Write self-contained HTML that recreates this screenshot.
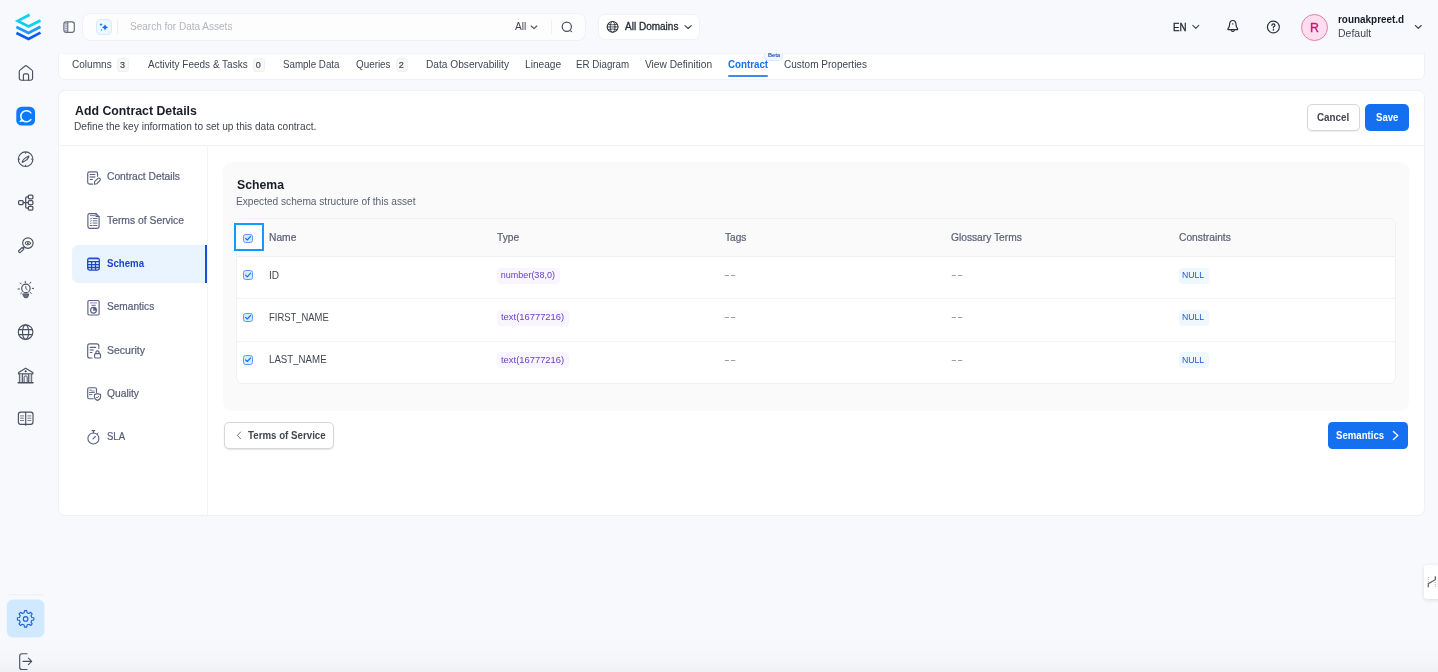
<!DOCTYPE html>
<html lang="en">
<head>
<meta charset="utf-8">
<title>Add Contract Details</title>
<style>
*{box-sizing:border-box;margin:0;padding:0}
html,body{width:1438px;height:672px;overflow:hidden}
body{background:#f8f9fc;font-family:"Liberation Sans",sans-serif;color:#414651;position:relative;font-size:10px}
.abs{position:absolute}
.t{position:absolute;white-space:nowrap;line-height:20px;height:20px;transform-origin:0 50%}
svg{position:absolute;overflow:visible}
.ic{fill:none;stroke-linecap:round;stroke-linejoin:round}
/* header */
#search{left:81.800px;top:12.500px;width:504px;height:28.800px;background:#fdfdfe;border:1px solid #eff1f6;border-radius:8px}
#spark{left:95.500px;top:18.800px;width:16.300px;height:16.200px;background:#eff7ff;border:1px solid #d3ebfd;border-radius:4.500px}
#domain{left:598.100px;top:14.300px;width:102.300px;height:26px;background:#fff;border:1px solid #f1f2f6;border-radius:7px}
/* tab bar */
#tabs{left:58.400px;top:53.400px;width:1366.700px;height:26.600px;background:#fff;border-radius:0 0 7px 7px;border:1px solid #eff1f6;border-top-color:#f4f5f9}
.badge{position:absolute;top:58px;height:14px;width:12px;background:#f7f7f8;border:1px solid #f0f0f2;border-radius:3px;font-size:8.8px;line-height:12.5px;text-align:center;color:#414651}
/* main */
#card{left:58.400px;top:89.500px;width:1366.800px;height:426px;background:#fff;border-radius:7px;border:1px solid #eff1f6}
#hdiv{left:59px;top:145px;width:1366px;height:1px;background:#f2f3f6}
#vdiv{left:207px;top:146px;width:1px;height:369px;background:#f2f3f6}
.btn{position:absolute;border-radius:5px;height:27px}
#navsel{left:72px;top:245px;width:135px;height:38px;background:#eaf4fe;border-radius:6px 0 0 6px;border-right:2px solid #1d4ed8}
#gray{left:223px;top:162px;width:1186px;height:249px;background:#fafafa;border-radius:9px}
#table{left:236px;top:218px;width:1160px;height:166px;background:#fff;border:1px solid #f0f1f3;border-radius:7px;overflow:hidden}
#thead{left:0;top:0;width:100%;height:38px;background:#fafafa;border-bottom:1px solid #f0f1f3}
.rline{position:absolute;left:0;width:100%;height:1px;background:#f3f4f6}
.cb{position:absolute;width:10px;height:9.6px;background:#d7e9fe;border:1px solid #5a9ef4;border-radius:2.6px}
.pill{position:absolute;height:16px;border-radius:4px}
.pp{background:#f9f5ff}
.pb{background:#eff8ff}
#txt{position:absolute;left:0;top:0;width:1438px;height:672px;will-change:transform}
</style>
</head>
<body>
<!-- ===== left app sidebar ===== -->
<svg id="logo" style="left:0;top:0" width="59" height="50" viewBox="0 0 59 50">
  <g fill="none" stroke-width="2.7" stroke-linejoin="miter" stroke-linecap="butt">
    <polyline points="16.4,33 28.5,39 40.5,32.6" stroke="#0b5cf5"/>
    <polyline points="16.4,27 28.5,32.9 40.5,26.7" stroke="#1a9cf5"/>
    <polyline points="29.6,14.700 17.800,20.900 28.500,26.500 40.500,20.500" stroke="#06d1f5"/>
  </g>
</svg>
<svg id="sideicons" style="left:0;top:50px" width="59" height="622" viewBox="0 50 59 622">
  <!-- home -->
  <g class="ic" stroke-width="1.15" stroke="#4a5061">
    <path d="M19.300 71.400 Q19.300 70.600 20 70.100 L25.100 66 Q25.900 65.400 26.700 66 L31.900 70.100 Q32.600 70.600 32.600 71.400 V78 Q32.600 80.200 30.400 80.200 H21.500 Q19.300 80.200 19.300 78 Z"/>
    <path d="M23.4 80.2 V75.3 Q23.4 73.9 24.8 73.9 H27.2 Q28.6 73.9 28.6 75.3 V80.2"/>
  </g>
  <!-- collate C -->
  <rect x="16.3" y="106.8" width="18.7" height="18.8" rx="5.2" fill="#0b7aff"/>
  <path d="M30.9 112.9 A5.6 5.6 0 1 0 30.9 119.6" fill="none" stroke="#fff" stroke-width="1.5" stroke-linecap="round"/>
  <path d="M21.6 119.3 L19.6 121.7 L23.2 121.1 Z" fill="#fff" stroke="#fff" stroke-width="0.6" stroke-linejoin="round"/>
  <!-- compass -->
  <g class="ic" stroke-width="1.15" stroke="#4a5061">
    <circle cx="25.6" cy="159.2" r="7.3"/>
    <path d="M22.2 162.4 Q22.6 158.8 28.9 156 Q28.6 159.6 22.2 162.4 Z" stroke-width="1.1"/>
    <path d="M25.6 152.4v.9M25.6 165.1v.9M18.8 159.2h.9M31.5 159.2h.9" stroke-width="1"/>
  </g>
  <!-- lineage -->
  <g class="ic" stroke="#4a5061" stroke-width="1.25">
    <rect x="18.6" y="200.5" width="4.6" height="4.1" rx="1.1"/>
    <rect x="28.3" y="195" width="4.6" height="3.8" rx="1.1"/>
    <rect x="28.3" y="200.6" width="4.6" height="3.9" rx="1.1"/>
    <rect x="28.3" y="206.3" width="4.6" height="3.8" rx="1.1"/>
    <path d="M23.2 202.5H28.3M28.3 196.9H26.8Q25.7 196.9 25.7 198V207.1Q25.7 208.2 26.8 208.2H28.3"/>
  </g>
  <!-- search eye -->
  <g class="ic" stroke-width="1.15" stroke="#4a5061">
    <circle cx="27.9" cy="243.1" r="5.2"/>
    <ellipse cx="27.9" cy="243.2" rx="2.7" ry="1.7" stroke-width="1"/>
    <circle cx="27.9" cy="243.2" r="1" fill="#4a5061" stroke="none"/>
    <path d="M22.200 247.300 L23.900 249 L20.700 252.200 Q19.850 253.050 19 252.200 Q18.150 251.350 19 250.500 Z" stroke-width="1.100"/>
    <path d="M23.100 248.100 L24.300 246.900" stroke-width="1.100"/>
  </g>
  <!-- bulb -->
  <g class="ic" stroke-width="1.15" stroke="#4a5061">
    <circle cx="25.9" cy="288.4" r="4.2"/>
    <path d="M23 293.9H28.8L27.9 296.9Q27.6 297.7 26.8 297.7H25Q24.2 297.7 23.9 296.9Z" fill="#6b7080" stroke-width="0.9"/>
    <path d="M25.8 286.3V288.6L27.2 289.6" stroke-width="0.9"/>
    <path d="M25.3 281.3v1.5M20.2 282.9l1 1.1M30.9 282.2l-1 1.2M18 289h1.5M32.3 288.4h1.3M20.6 293.8l1-1M30.3 292.4l1 1" stroke-width="1"/>
  </g>
  <!-- globe -->
  <g class="ic" stroke-width="1.15" stroke="#4a5061">
    <circle cx="25.6" cy="332.1" r="7.3"/>
    <ellipse cx="25.6" cy="332.1" rx="3.1" ry="7.3"/>
    <path d="M18.9 329.6H32.3M18.9 334.6H32.3"/>
  </g>
  <!-- bank -->
  <g class="ic" stroke-width="1.15" stroke="#4a5061">
    <path d="M18.6 373.9 Q18 372.8 19 372.2 L25.6 368.2 L32.4 372.2 Q33.4 372.8 32.7 373.9 Z"/>
    <circle cx="25.6" cy="371.3" r="0.7" fill="#414651" stroke-width="0.6"/>
    <rect x="19.5" y="374.4" width="2.8" height="8" fill="#c9ccd2" stroke="none"/>
    <rect x="28.7" y="374.4" width="2.8" height="8" fill="#c9ccd2" stroke="none"/>
    <path d="M19.4 374.4V382.3M22.5 374.4V382.3M28.6 374.4V382.3M31.7 374.4V382.3" stroke-width="0.9"/>
    <path d="M24.1 382.3V377Q24.1 376 25.1 376H26.2Q27.2 376 27.2 377V382.3" stroke-width="1"/>
    <path d="M18.2 382.7H33" stroke-width="1.5"/>
  </g>
  <!-- book -->
  <g class="ic" stroke-width="1.15" stroke="#4a5061">
    <rect x="18.4" y="412.1" width="14.6" height="12.2" rx="2.3"/>
    <path d="M25.7 412.4V425.2"/>
    <path d="M20.4 415.9h3.3M20.4 418.2h3.3M20.4 420.5h3.3M27.8 415.9h3.1M27.8 418.2h3.1M27.8 420.5h3.1" stroke-width="0.9" stroke="#6b7080"/>
  </g>
  <!-- settings -->
  <rect x="6.7" y="594.2" width="37.8" height="1" fill="#eef0f4"/>
  <rect x="6.7" y="599.5" width="37.8" height="37.9" rx="6.5" fill="#d1e9ff"/>
  <g fill="none" stroke="#1d5fd8" stroke-width="1.1" stroke-linejoin="round">
    <circle cx="25.6" cy="618.9" r="2.3"/>
    <path d="M24.13 612.77 L24.50 610.67 L26.70 610.67 L27.07 612.77 L28.89 613.53 L30.64 612.30 L32.20 613.86 L30.97 615.61 L31.73 617.43 L33.83 617.80 L33.83 620.00 L31.73 620.37 L30.97 622.19 L32.20 623.94 L30.64 625.50 L28.89 624.27 L27.07 625.03 L26.70 627.13 L24.50 627.13 L24.13 625.03 L22.31 624.27 L20.56 625.50 L19.00 623.94 L20.23 622.19 L19.47 620.37 L17.37 620.00 L17.37 617.80 L19.47 617.43 L20.23 615.61 L19.00 613.86 L20.56 612.30 L22.31 613.53Z"/>
  </g>
  <!-- logout -->
  <g class="ic" stroke="#4a5061" stroke-width="1.1">
    <path d="M27 653.7H22Q19.7 653.7 19.7 656V667.2Q19.7 669.5 22 669.5H27"/>
    <path d="M23 661.4H31.6M28.4 658.1L31.7 661.4L28.4 664.7"/>
  </g>
</svg>

<!-- ===== top header ===== -->
<svg style="left:56px;top:10px" width="30" height="35" viewBox="56 10 30 35">
  <rect x="63.9" y="21.8" width="10.4" height="10.5" rx="2.2" fill="#fff" stroke="#676c79" stroke-width="1.2"/>
  <path d="M66.1 22.4H67.7V31.7H66.1Q64.5 31.7 64.5 30.1V24Q64.5 22.4 66.1 22.4Z" fill="#a4a9b5"/>
  <path d="M67.8 22V32" stroke="#676c79" stroke-width="1.1"/>
  <path d="M65 25h2.2M65 27.2h2.2M65 29.4h2.2" stroke="#fff" stroke-width="0.7"/>
</svg>
<div class="abs" id="search"></div>
<div class="abs" id="spark"></div>
<svg style="left:95px;top:18px" width="18" height="18" viewBox="95 18 18 18">
  <path d="M105 24.300 Q105.500 26.900 108 27.400 Q105.500 27.900 105 30.500 Q104.500 27.900 102 27.400 Q104.500 26.900 105 24.300Z" fill="#1570ef"/>
  <path d="M101 23 Q101.3 24.3 102.6 24.6 Q101.3 24.9 101 26.2 Q100.7 24.9 99.4 24.6 Q100.7 24.3 101 23Z" fill="#1570ef"/>
  <path d="M101.5 28.9 Q101.7 29.8 102.6 30 Q101.7 30.2 101.5 31.1 Q101.3 30.2 100.4 30 Q101.3 29.8 101.5 28.9Z" fill="#1570ef"/>
</svg>
<div class="abs" style="left:117px;top:20px;width:1px;height:14px;background:#eceef4"></div>
<svg style="left:528px;top:22px" width="12" height="10" viewBox="528 22 12 10"><path class="ic" stroke="#4a5061" d="M531.2 26 L534 28.7 L536.8 26" stroke-width="1.1"/></svg>
<div class="abs" style="left:551px;top:20px;width:1px;height:14px;background:#eceef4"></div>
<svg style="left:558px;top:18px" width="18" height="18" viewBox="558 18 18 18">
  <circle class="ic" stroke="#4a5061" cx="566.8" cy="26.8" r="4.6" stroke-width="1.2"/>
  <path class="ic" stroke="#4a5061" d="M570.6 30.8 L571.5 31.7" stroke-width="1.2"/>
</svg>
<div class="abs" id="domain"></div>
<svg style="left:604px;top:18px" width="18" height="18" viewBox="604 18 18 18">
  <g class="ic" stroke="#2b313d" stroke-width="1.05">
    <circle cx="612.6" cy="26.900" r="5.400"/>
    <ellipse cx="612.6" cy="26.900" rx="2.400" ry="5.400" stroke-width="0.850"/>
    <path d="M607.2 26.900H618M608.200 24.300Q612.600 25.400 617 24.300M608.200 29.500Q612.600 28.400 617 29.500" stroke-width="0.850"/>
  </g>
</svg>
<svg style="left:682px;top:22px" width="12" height="10" viewBox="682 22 12 10"><path class="ic" d="M685 25.600 L688.150 28.500 L691.300 25.600" stroke="#3a404c" stroke-width="1.100"/></svg>
<svg style="left:1190px;top:22px" width="12" height="10" viewBox="1190 22 12 10"><path class="ic" d="M1192.800 25.400 L1195.800 28.400 L1198.800 25.400" stroke="#3a404c" stroke-width="1.100"/></svg>
<svg style="left:1224px;top:16px" width="18" height="20" viewBox="1224 16 18 20">
  <g class="ic" stroke="#252b37" stroke-width="1.2">
    <path d="M1229.6 24.6 Q1229.6 20.5 1232.8 20.5 Q1236 20.5 1236 24.6 Q1236 27 1237.6 28.6 Q1238 29.6 1237 29.6 H1228.6 Q1227.6 29.6 1228 28.6 Q1229.6 27 1229.6 24.6Z"/>
    <path d="M1231.2 30.6 Q1232.8 32.2 1234.4 30.6"/>
    <path d="M1232.8 23.5V24.3" stroke-width="0.9"/>
  </g>
</svg>
<svg style="left:1264px;top:18px" width="18" height="18" viewBox="1264 18 18 18">
  <circle class="ic" cx="1273.4" cy="27" r="5.950" stroke="#2c323e" stroke-width="1.150"/>
  <path class="ic" d="M1271.9 25.3 Q1271.9 23.8 1273.4 23.8 Q1274.9 23.8 1274.9 25.2 Q1274.9 26.2 1273.4 27 V27.8" stroke="#252b37" stroke-width="1.2"/>
  <circle cx="1273.4" cy="29.9" r="0.8" fill="#252b37"/>
</svg>
<div class="abs" style="left:1301px;top:13.500px;width:27.100px;height:27.100px;border-radius:50%;background:#ffdcee;border:1px solid #e07fb0"></div>
<svg style="left:1412px;top:22px" width="12" height="10" viewBox="1412 22 12 10"><path class="ic" d="M1415.400 25.500 L1418.300 28.400 L1421.200 25.500" stroke="#3a404c" stroke-width="1.100"/></svg>

<!-- ===== tab bar ===== -->
<div class="abs" id="tabs"></div>
<div class="badge" style="left:117px;width:12px"></div>
<div class="badge" style="left:252.5px;width:12px"></div>
<div class="badge" style="left:395.5px;width:12px"></div>
<div class="abs" style="left:728px;top:75px;width:40px;height:2px;background:#3d8bf2;border-radius:1px"></div>
<div class="abs" style="left:764.200px;top:50px;width:18.800px;height:10.700px;background:#f1f8ff;border:1px solid #d6eafd;border-radius:4.500px"></div>
<div class="abs" style="left:760px;top:44px;width:28px;height:9.400px;background:#f8f9fc;z-index:5"></div>

<!-- ===== main card ===== -->
<div class="abs" id="card"></div>
<div class="abs" id="hdiv"></div>
<div class="abs" id="vdiv"></div>
<div class="btn" style="left:1307px;top:104px;width:53px;background:#fff;border:1px solid #d5d7da;box-shadow:0 1px 1.5px rgba(10,13,18,.08)"></div>
<div class="btn" style="left:1365px;top:104px;width:44px;background:#1570ef"></div>

<!-- contract nav -->
<div class="abs" id="navsel"></div>
<svg id="navicons" style="left:80px;top:160px" width="30" height="300" viewBox="80 160 30 300">
  <g fill="none" stroke="#5a6180" stroke-width="1.15" stroke-linecap="round" stroke-linejoin="round">
    <!-- contract details -->
    <path d="M92.6 184.1H89.6Q87.7 184.1 87.7 182.2V173.8Q87.7 171.9 89.6 171.9H95.7Q97.6 171.9 97.6 173.8V176.3"/>
    <path d="M90.2 174.5H94.8M90.2 179.5H92.4"/>
    <path d="M90.2 177H94.8" stroke-width="1.6" stroke="#7b8296"/>
    <path d="M94.3 184.2 L94.6 181.7 L97.9 178.4 Q98.9 177.5 99.9 178.5 Q100.9 179.500 100 180.500 L96.700 183.800 Z" stroke-width="1.1"/>
    <!-- terms of service -->
    <path d="M96.1 213.6H89.6Q87.9 213.6 87.9 215.3V226.6Q87.9 228.3 89.6 228.3H97.4Q99.1 228.3 99.1 226.6V216.6Z"/>
    <path d="M96.1 213.8V216.5H99"/>
    <path d="M90.4 215.6H94.8" stroke-width="0.8"/>
    <path d="M93.2 218.5H97M93.2 220.8H97M93.2 223.1H97M93.2 225.5H97" stroke-width="0.9"/>
    <path d="M90.3 218.6l.6.5.9-1M90.3 220.9l.6.5.9-1M90.3 223.2l.6.5.9-1" stroke-width="0.7"/>
    <path d="M90.3 225.5h1.5" stroke-width="1.2"/>
    <!-- semantics -->
    <rect x="87.9" y="300.5" width="11.2" height="14.5" rx="1.2"/>
    <path d="M90.4 302.9H96.7" stroke-width="0.9" stroke="#7b8296"/>
    <path d="M91.8 305.3H95.4" stroke-width="0.9"/>
    <circle cx="93.5" cy="310.2" r="2.9"/>
    <path d="M93.5 310.2V307.3A2.9 2.9 0 0 1 96.4 310.2Z" fill="#5a6180" stroke-width="0.6"/>
    <!-- security -->
    <path d="M92 358H89.7Q87.7 358 87.7 356V345.9Q87.7 343.9 89.7 343.9H96.8Q98.8 343.9 98.8 345.9V348.3"/>
    <path d="M90.2 347.3H95.7M90.2 352.5H91.9"/>
    <path d="M90.2 350H93.3" stroke-width="1.5" stroke="#8a90a2"/>
    <rect x="94.6" y="353.6" width="5.9" height="4.4" rx="1.1"/>
    <path d="M95.9 353.5V352.4Q95.9 350.8 97.5 350.8Q99.1 350.8 99.1 352.4V353.5"/>
    <!-- quality -->
    <path d="M93.3 398.7H89.2Q87.7 398.7 87.7 397.2V389.2Q87.7 387.7 89.2 387.7H95Q96.5 387.7 96.5 389.2V392.3"/>
    <rect x="89.4" y="389.4" width="2.2" height="1.6" fill="#9ea3b2" stroke="none"/>
    <path d="M89.4 392.5H94.3M89.4 394.6H92" stroke-width="0.9"/>
    <path d="M91.8 391H94.3" stroke-width="0.8"/>
    <path d="M97.5 393.6 Q99.2 394.4 100.6 394.6 V396.8 Q100.6 399.2 97.5 400.5 Q94.4 399.2 94.4 396.800 V394.6 Q95.800 394.4 97.500 393.600Z" stroke-width="1.1"/>
    <path d="M96.3 397.2l.9.800 1.600-1.800" stroke-width="0.9"/>
    <!-- sla -->
    <circle cx="93.4" cy="438.5" r="5.500"/>
    <path d="M93.4 433V430.700M92.100 430.600H94.700" stroke-width="1.200"/>
    <path d="M97.300 433.800l.800-.800" stroke-width="1"/>
    <path d="M93 438.900L95.400 436.500" stroke-width="1.100"/>
  </g>
  <!-- schema (active) -->
  <g fill="none" stroke="#1e43d0" stroke-width="1.3" stroke-linejoin="round">
    <rect x="87.700" y="258.100" width="11.600" height="12" rx="1.800"/>
    <path d="M87.700 261.600H99.300M87.700 264.600H99.300M87.700 267.500H99.300M91.600 261.600V270.100M95.500 261.600V270.100"/>
    <path d="M88.400 258.800H98.600" stroke-width="1"/>
  </g>
</svg>

<!-- schema panel -->
<div class="abs" id="gray"></div>
<div class="abs" id="table">
  <div class="abs" id="thead"></div>
  <div class="rline" style="top:79px"></div>
  <div class="rline" style="top:122px"></div>
</div>
<div class="abs" style="left:234px;top:223px;width:30px;height:28px;border:2px solid #119bff;background:#fff"></div>
<div class="cb" style="left:243px;top:233.500px"></div>
<div class="cb" style="left:243px;top:270.300px"></div>
<div class="cb" style="left:243px;top:312.500px"></div>
<div class="cb" style="left:243px;top:355px"></div>
<svg style="left:240px;top:230px" width="16" height="140" viewBox="240 230 16 140">
  <g fill="none" stroke="#1570ef" stroke-width="1.150" stroke-linecap="round" stroke-linejoin="round">
    <path d="M245.500 238.300l1.800 1.700 3.300-3.600"/>
    <path d="M245.500 275.100l1.800 1.700 3.300-3.600"/>
    <path d="M245.500 317.300l1.800 1.700 3.300-3.600"/>
    <path d="M245.500 359.800l1.800 1.700 3.300-3.600"/>
  </g>
</svg>
<div class="pill pp" style="left:497px;top:267.600px;width:63.200px"></div>
<div class="pill pp" style="left:497px;top:309.800px;width:72.300px"></div>
<div class="pill pp" style="left:497px;top:352.200px;width:72.300px"></div>
<div class="pill pb" style="left:1178.600px;top:267.600px;width:30.200px"></div>
<div class="pill pb" style="left:1178.600px;top:309.800px;width:30.200px"></div>
<div class="pill pb" style="left:1178.600px;top:352.200px;width:30.200px"></div>

<!-- bottom buttons -->
<div class="btn" style="left:224px;top:422px;width:110px;height:27px;background:#fff;border:1px solid #d5d7da;box-shadow:0 1px 1.500px rgba(10,13,18,.1)"></div>
<svg style="left:232px;top:428px" width="14" height="14" viewBox="232 428 14 14"><path class="ic" d="M240.600 432 L237.400 435.400 L240.600 438.800" stroke="#717680" stroke-width="1"/></svg>
<div class="btn" style="left:1328px;top:422px;width:80.300px;height:26.800px;background:#1570ef;border-radius:4.500px"></div>
<svg style="left:1388px;top:428px" width="14" height="14" viewBox="1388 428 14 14"><path class="ic" d="M1393.400 431.500 L1397.800 435.500 L1393.400 439.500" stroke="#fff" stroke-width="1.300"/></svg>

<!-- floating widget -->
<div class="abs" style="left:1424px;top:565px;width:20px;height:33.500px;background:#fff;border-radius:3px;box-shadow:0 1px 4px rgba(0,0,0,.12)"></div>
<svg style="left:1424px;top:570px" width="14" height="24" viewBox="1424 570 14 24">
  <path d="M1428.300 587.300V583.600L1435.300 579.700V576.300" fill="none" stroke="#666" stroke-width="1.300"/>
  <path d="M1428.300 577v5M1435.300 582v5" fill="none" stroke="#999" stroke-width="0.800" stroke-dasharray="1 1"/>
</svg>
<div class="abs" style="left:0;top:636px;width:1438px;height:36px;background:linear-gradient(to bottom,rgba(0,0,0,0) 0%,rgba(0,0,0,.006) 40%,rgba(0,0,0,.016) 75%,rgba(0,0,0,.034) 100%)"></div>

<!-- ===== text ===== -->
<div id="txt">
<span class="t" id="s_ph" style="left:130.08px;top:17px;font-size:10px;font-weight:400;color:#b3b6bd;transform:scaleX(1.0011);">Search for Data Assets</span>
<span class="t" id="s_all" style="left:514.71px;top:17px;font-size:10px;font-weight:400;color:#414651;transform:scaleX(1.0189);">All</span>
<span class="t" id="s_dom" style="left:625.44px;top:17px;font-size:10px;font-weight:400;color:#252b37;-webkit-text-stroke:0.3px #252b37;transform:scaleX(1.0011);">All Domains</span>
<span class="t" id="s_en" style="left:1173.29px;top:18px;font-size:10px;font-weight:400;color:#252b37;-webkit-text-stroke:0.3px #252b37;transform:scaleX(0.9746);">EN</span>
<span class="t" id="s_name" style="left:1338.24px;top:10px;font-size:10px;font-weight:700;color:#181d27;transform:scaleX(0.9925);">rounakpreet.d</span>
<span class="t" id="s_def" style="left:1338.04px;top:24px;font-size:10px;font-weight:400;color:#414651;transform:scaleX(1.049);">Default</span>
<span class="t" id="s_r" style="left:1309.69px;top:18px;font-size:12.5px;font-weight:400;color:#be1e78;-webkit-text-stroke:0.35px #be1e78;transform:scaleX(0.9892);">R</span>
<span class="t" id="tb1" style="left:71.88px;top:55px;font-size:10px;font-weight:400;color:#414651;transform:scaleX(1.0053);">Columns</span>
<span class="t" id="tb2" style="left:147.63px;top:55px;font-size:10px;font-weight:400;color:#414651;transform:scaleX(0.9978);">Activity Feeds &amp; Tasks</span>
<span class="t" id="tb3" style="left:283.03px;top:55px;font-size:10px;font-weight:400;color:#414651;transform:scaleX(0.9772);">Sample Data</span>
<span class="t" id="tb4" style="left:355.85px;top:55px;font-size:10px;font-weight:400;color:#414651;transform:scaleX(0.9856);">Queries</span>
<span class="t" id="tb5" style="left:426.3px;top:55px;font-size:10px;font-weight:400;color:#414651;transform:scaleX(1.016);">Data Observability</span>
<span class="t" id="tb6" style="left:525.06px;top:55px;font-size:10px;font-weight:400;color:#414651;transform:scaleX(1.0162);">Lineage</span>
<span class="t" id="tb7" style="left:576.28px;top:55px;font-size:10px;font-weight:400;color:#414651;transform:scaleX(0.9755);">ER Diagram</span>
<span class="t" id="tb8" style="left:645.2px;top:55px;font-size:10px;font-weight:400;color:#414651;transform:scaleX(1.0185);">View Definition</span>
<span class="t" id="tb9" style="left:727.6px;top:55px;font-size:10px;font-weight:700;color:#1570ef;transform:scaleX(0.9756);">Contract</span>
<span class="t" id="tb10" style="left:784.04px;top:55px;font-size:10px;font-weight:400;color:#414651;transform:scaleX(1.0017);">Custom Properties</span>
<span class="t" id="tbeta" style="left:767.6px;top:45px;font-size:5px;font-weight:700;color:#2450b4;transform:scaleX(1.12);">Beta</span>
<span class="t" id="bd1" style="left:120.06px;top:55px;font-size:9px;font-weight:400;color:#414651;-webkit-text-stroke:0.2px #414651;">3</span>
<span class="t" id="bd2" style="left:255.66px;top:55px;font-size:9px;font-weight:400;color:#414651;-webkit-text-stroke:0.2px #414651;">0</span>
<span class="t" id="bd3" style="left:398.66px;top:55px;font-size:9px;font-weight:400;color:#414651;-webkit-text-stroke:0.2px #414651;">2</span>
<span class="t" id="h1" style="left:74.81px;top:101px;font-size:12.5px;font-weight:700;color:#181d27;transform:scaleX(0.9858);">Add Contract Details</span>
<span class="t" id="h2" style="left:74.15px;top:117px;font-size:10px;font-weight:400;color:#414651;transform:scaleX(1.0139);">Define the key information to set up this data contract.</span>
<span class="t" id="b_cancel" style="left:1317.28px;top:108px;font-size:10px;font-weight:700;color:#414651;transform:scaleX(0.9857);">Cancel</span>
<span class="t" id="b_save" style="left:1375.9px;top:108px;font-size:10px;font-weight:700;color:#ffffff;transform:scaleX(0.9622);">Save</span>
<span class="t" id="n1" style="left:107.35px;top:167px;font-size:10px;font-weight:400;color:#565d78;-webkit-text-stroke:0.2px #565d78;transform:scaleX(1.0243);">Contract Details</span>
<span class="t" id="n2" style="left:107.09px;top:211px;font-size:10px;font-weight:400;color:#565d78;-webkit-text-stroke:0.2px #565d78;transform:scaleX(1.0335);">Terms of Service</span>
<span class="t" id="n3" style="left:107.25px;top:254px;font-size:10px;font-weight:700;color:#1e43d0;transform:scaleX(0.9673);">Schema</span>
<span class="t" id="n4" style="left:107px;top:297px;font-size:10px;font-weight:400;color:#565d78;-webkit-text-stroke:0.2px #565d78;transform:scaleX(1.0109);">Semantics</span>
<span class="t" id="n5" style="left:107.34px;top:341px;font-size:10px;font-weight:400;color:#565d78;-webkit-text-stroke:0.2px #565d78;transform:scaleX(1.0491);">Security</span>
<span class="t" id="n6" style="left:107.27px;top:384px;font-size:10px;font-weight:400;color:#565d78;-webkit-text-stroke:0.2px #565d78;transform:scaleX(1.0259);">Quality</span>
<span class="t" id="n7" style="left:107.22px;top:427px;font-size:10px;font-weight:400;color:#565d78;-webkit-text-stroke:0.2px #565d78;transform:scaleX(0.9528);">SLA</span>
<span class="t" id="sc1" style="left:236.58px;top:175px;font-size:12px;font-weight:700;color:#181d27;transform:scaleX(1.0199);">Schema</span>
<span class="t" id="sc2" style="left:236.16px;top:192px;font-size:10px;font-weight:400;color:#5b6172;transform:scaleX(1.0126);">Expected schema structure of this asset</span>
<span class="t" id="th1" style="left:269.1px;top:228px;font-size:10px;font-weight:400;color:#596073;-webkit-text-stroke:0.2px #596073;transform:scaleX(1.0261);">Name</span>
<span class="t" id="th2" style="left:497.25px;top:228px;font-size:10px;font-weight:400;color:#596073;-webkit-text-stroke:0.2px #596073;transform:scaleX(1.0226);">Type</span>
<span class="t" id="th3" style="left:724.58px;top:228px;font-size:10px;font-weight:400;color:#596073;-webkit-text-stroke:0.2px #596073;transform:scaleX(1.009);">Tags</span>
<span class="t" id="th4" style="left:951.01px;top:228px;font-size:10px;font-weight:400;color:#596073;-webkit-text-stroke:0.2px #596073;transform:scaleX(1.0212);">Glossary Terms</span>
<span class="t" id="th5" style="left:1178.54px;top:228px;font-size:10px;font-weight:400;color:#596073;-webkit-text-stroke:0.2px #596073;transform:scaleX(1.0246);">Constraints</span>
<span class="t" id="r1" style="left:269.44px;top:266px;font-size:10px;font-weight:400;color:#414651;transform:scaleX(1.0098);">ID</span>
<span class="t" id="r2" style="left:269.15px;top:308px;font-size:10px;font-weight:400;color:#414651;transform:scaleX(0.9435);">FIRST_NAME</span>
<span class="t" id="r3" style="left:269.03px;top:350px;font-size:10px;font-weight:400;color:#414651;transform:scaleX(0.9685);">LAST_NAME</span>
<span class="t" id="ty1" style="left:500.86px;top:265px;font-size:9px;font-weight:400;color:#6941c6;">number(38,0)</span>
<span class="t" id="ty2" style="left:500.94px;top:307px;font-size:9px;font-weight:400;color:#6941c6;transform:scaleX(1.0429);">text(16777216)</span>
<span class="t" id="ty3" style="left:500.94px;top:350px;font-size:9px;font-weight:400;color:#6941c6;transform:scaleX(1.0429);">text(16777216)</span>
<span class="t" id="d1" style="left:724.3px;top:265px;font-size:10px;font-weight:400;color:#8d929d;transform:scaleX(1.72);letter-spacing:0.25px;">--</span>
<span class="t" id="d2" style="left:724.3px;top:307px;font-size:10px;font-weight:400;color:#8d929d;transform:scaleX(1.72);letter-spacing:0.25px;">--</span>
<span class="t" id="d3" style="left:724.3px;top:350px;font-size:10px;font-weight:400;color:#8d929d;transform:scaleX(1.72);letter-spacing:0.25px;">--</span>
<span class="t" id="d4" style="left:951.1px;top:265px;font-size:10px;font-weight:400;color:#8d929d;transform:scaleX(1.72);letter-spacing:0.25px;">--</span>
<span class="t" id="d5" style="left:951.1px;top:307px;font-size:10px;font-weight:400;color:#8d929d;transform:scaleX(1.72);letter-spacing:0.25px;">--</span>
<span class="t" id="d6" style="left:951.1px;top:350px;font-size:10px;font-weight:400;color:#8d929d;transform:scaleX(1.72);letter-spacing:0.25px;">--</span>
<span class="t" id="nu1" style="left:1182.1px;top:265px;font-size:9px;font-weight:400;color:#175cd3;transform:scaleX(0.9648);">NULL</span>
<span class="t" id="nu2" style="left:1182.1px;top:307px;font-size:9px;font-weight:400;color:#175cd3;transform:scaleX(0.9648);">NULL</span>
<span class="t" id="nu3" style="left:1182.1px;top:350px;font-size:9px;font-weight:400;color:#175cd3;transform:scaleX(0.9648);">NULL</span>
<span class="t" id="bt1" style="left:248.3px;top:426px;font-size:10px;font-weight:700;color:#414651;transform:scaleX(0.9725);">Terms of Service</span>
<span class="t" id="bt2" style="left:1336.01px;top:426px;font-size:10px;font-weight:700;color:#ffffff;transform:scaleX(0.9612);">Semantics</span>
</div>
</body>
</html>
